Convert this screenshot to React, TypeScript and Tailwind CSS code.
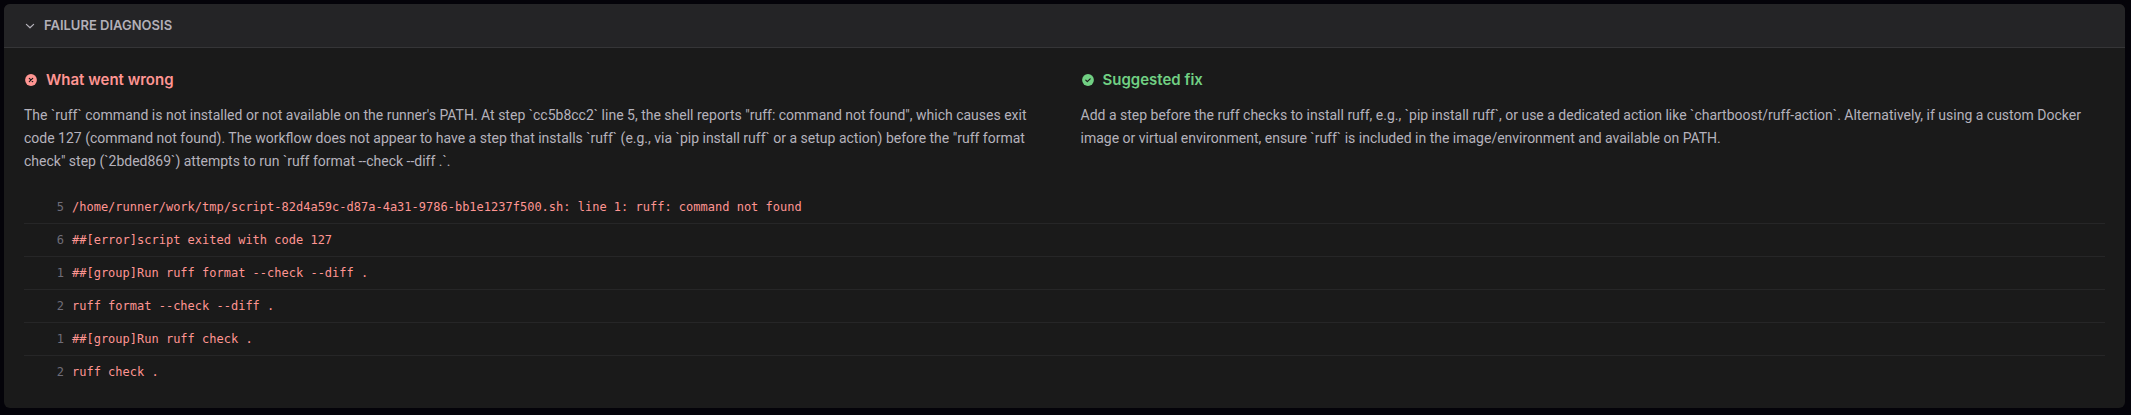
import { useState } from 'react';

interface LogLine {
  line: number;
  text: string;
}

const WHAT_WENT_WRONG =
  'The `ruff` command is not installed or not available on the runner\'s PATH. At step `cc5b8cc2` line 5, the shell reports "ruff: command not found", which causes exit code 127 (command not found). The workflow does not appear to have a step that installs `ruff` (e.g., via `pip install ruff` or a setup action) before the "ruff format check" step (`2bded869`) attempts to run `ruff format --check --diff .`.';

const SUGGESTED_FIX =
  'Add a step before the ruff checks to install ruff, e.g., `pip install ruff`, or use a dedicated action like `chartboost/ruff-action`. Alternatively, if using a custom Docker image or virtual environment, ensure `ruff` is included in the image/environment and available on PATH.';

const LOG_LINES: LogLine[] = [
  { line: 5, text: '/home/runner/work/tmp/script-82d4a59c-d87a-4a31-9786-bb1e1237f500.sh: line 1: ruff: command not found' },
  { line: 6, text: '##[error]script exited with code 127' },
  { line: 1, text: '##[group]Run ruff format --check --diff .' },
  { line: 2, text: 'ruff format --check --diff .' },
  { line: 1, text: '##[group]Run ruff check .' },
  { line: 2, text: 'ruff check .' },
];

function ChevronIcon({ open }: { open: boolean }) {
  return (
    <svg viewBox="0 0 12 12" fill="none" className={open ? 'size-3' : 'size-3 -rotate-90'} aria-hidden="true">
      <path d="M2.4 4.4 6 7.8l3.6-3.4" stroke="currentColor" strokeWidth="1.2" strokeLinecap="round" strokeLinejoin="round" />
    </svg>
  );
}

function ErrorIcon() {
  return (
    <svg viewBox="0 0 14 14" className="size-3.5" aria-hidden="true">
      <circle cx="7" cy="7" r="5.9" fill="currentColor" />
      <path d="m5.3 5.3 3.4 3.4M8.7 5.3 5.3 8.7" stroke="#1a1a1a" strokeWidth="1.2" strokeLinecap="round" />
    </svg>
  );
}

function CheckIcon() {
  return (
    <svg viewBox="0 0 14 14" className="size-3.5" aria-hidden="true">
      <circle cx="7" cy="7" r="5.9" fill="currentColor" />
      <path d="m4.8 7.2 1.5 1.5 2.9-2.9" fill="none" stroke="#1a1a1a" strokeWidth="1.2" strokeLinecap="round" strokeLinejoin="round" />
    </svg>
  );
}

export default function App() {
  const [open, setOpen] = useState(true);

  return (
    <div className="min-h-screen bg-[#040309] pt-1 pr-1.5 pb-1.5 pl-1 font-['Roboto',sans-serif]">
      <section className="overflow-hidden rounded-md bg-[#1a1a1a]">
        {/* Header */}
        <button
          type="button"
          aria-expanded={open}
          onClick={() => setOpen(!open)}
          className="flex h-11 w-full cursor-pointer items-center gap-2 border-b border-[#353537] bg-[#242426] px-5 font-['Inter',sans-serif] text-[13px] font-semibold text-[#b3b0b8]"
        >
          <ChevronIcon open={open} />
          FAILURE DIAGNOSIS
        </button>

        {open && (
          <div className="p-5">
            {/* Diagnosis */}
            <div className="grid grid-cols-2 gap-8">
              <div>
                <h3 className="mb-3 flex items-center gap-2 font-['Inter',sans-serif] text-[15px] leading-6 font-semibold text-[#ff9592]">
                  <ErrorIcon />
                  What went wrong
                </h3>
                <p className="text-sm leading-[23px] text-[#b5b2bc]">{WHAT_WENT_WRONG}</p>
              </div>
              <div>
                <h3 className="mb-3 flex items-center gap-2 font-['Inter',sans-serif] text-[15px] leading-6 font-semibold text-[#71d083]">
                  <CheckIcon />
                  Suggested fix
                </h3>
                <p className="text-sm leading-[23px] text-[#b5b2bc]">{SUGGESTED_FIX}</p>
              </div>
            </div>

            {/* Log excerpt */}
            <ol className="mt-[18px] divide-y divide-[#262627] font-['DejaVu_Sans_Mono',monospace] text-xs">
              {LOG_LINES.map((entry, i) => (
                <li key={i} className="flex gap-2 py-2">
                  <span className="w-10 text-right text-[#6f6d78]">{entry.line}</span>
                  <span className="text-[#ff9592]">{entry.text}</span>
                </li>
              ))}
            </ol>
          </div>
        )}
      </section>
    </div>
  );
}
